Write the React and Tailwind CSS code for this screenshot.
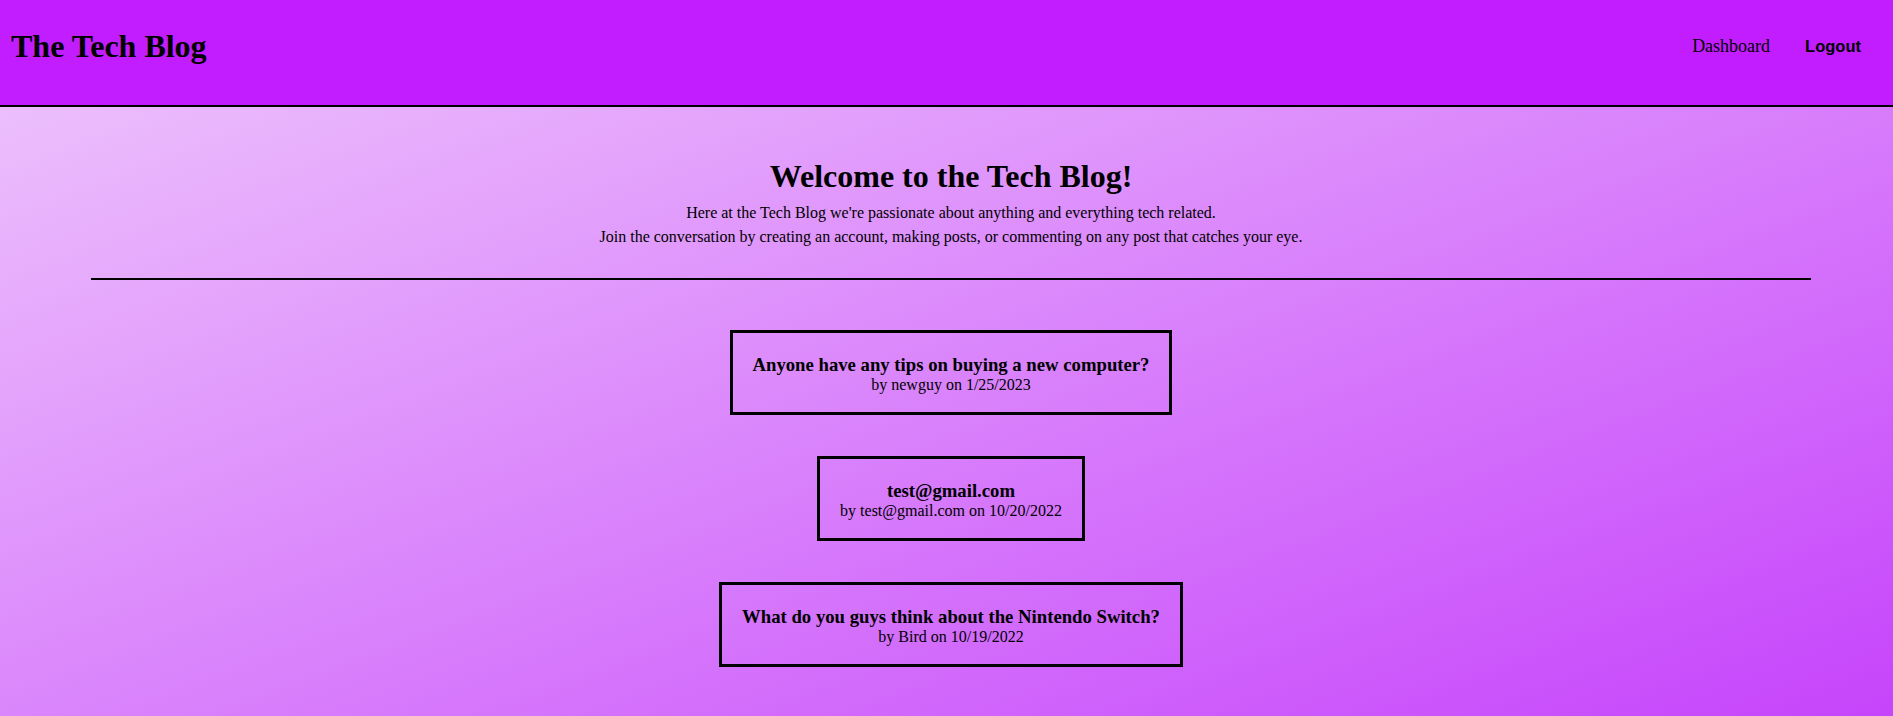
import React from 'react'

const posts = [
  { title: 'Anyone have any tips on buying a new computer?', author: 'newguy', date: '1/25/2023' },
  { title: 'test@gmail.com', author: 'test@gmail.com', date: '10/20/2022' },
  { title: 'What do you guys think about the Nintendo Switch?', author: 'Bird', date: '10/19/2022' },
]

function Header() {
  return (
    <header className="h-[107px] bg-[#c11dff] border-b-2 border-black flex items-start justify-between">
      <h1 className="text-[32px] font-bold leading-[36px] mt-[28px] ml-[11px]">The Tech Blog</h1>
      <nav className="flex items-baseline gap-[35px] mt-[36px] mr-[32px]">
        <a className="text-[18px] leading-[20px] cursor-pointer">Dashboard</a>
        <button className="font-['Liberation_Sans',Arial,sans-serif] font-bold text-[16.5px] leading-[20px]">
          Logout
        </button>
      </nav>
    </header>
  )
}

function PostCard({ post }) {
  return (
    <div className="w-fit mx-auto mt-[41px] first:mt-0 border-[3px] border-black px-[20px] pt-[21px] pb-[18px]">
      <h3 className="text-[18.72px] font-bold leading-[normal]">{post.title}</h3>
      <p className="text-[16px] leading-[normal]">
        by {post.author} on {post.date}
      </p>
    </div>
  )
}

export default function App() {
  return (
    <div className="min-h-screen bg-[linear-gradient(to_bottom_right,#efc8fc,#c644fb)] font-['Liberation_Serif','Times_New_Roman',serif] text-black">
      <Header />
      <main className="ml-[91px] mr-[82px] text-center pb-10">
        <h2 className="text-[32px] font-bold leading-[36px] mt-[51px]">Welcome to the Tech Blog!</h2>
        <p className="text-[16px] leading-[24px] mt-[7px]">
          Here at the Tech Blog we're passionate about anything and everything tech related.
        </p>
        <p className="text-[16px] leading-[24px]">
          Join the conversation by creating an account, making posts, or commenting on any post that catches your eye.
        </p>
        <hr className="border-0 border-t-2 border-black mt-[29px]" />
        <section className="mt-[50px]">
          {posts.map((post, i) => (
            <PostCard key={i} post={post} />
          ))}
        </section>
      </main>
    </div>
  )
}
